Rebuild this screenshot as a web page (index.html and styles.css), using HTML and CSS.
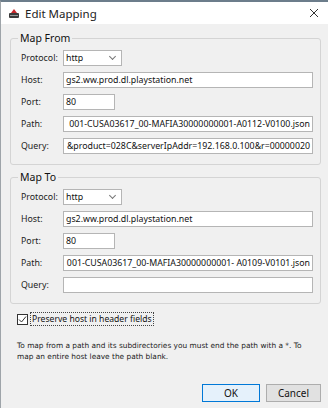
FILE: index.html
```html
<!DOCTYPE html>
<html lang="en">
<head>
    <meta charset="UTF-8">
    <title>Edit Mapping</title>
    <link rel="stylesheet" href="styles.css">
</head>
<body>
    <div class="window">
        <div class="titlebar">
            <svg class="app-icon" width="12" height="12" viewBox="0 0 12 12">
                <rect x="1" y="6" width="10" height="5" rx="1" fill="#3a3a3a"/>
                <path d="M3 6 L6 2 L9 6 Z" fill="#c8262a"/>
                <rect x="2" y="8" width="8" height="1" fill="#9a9a9a"/>
            </svg>
            <span class="title">Edit Mapping</span>
            <svg class="close" width="10" height="10" viewBox="0 0 10 10">
                <path d="M1 1 L9 9 M9 1 L1 9" stroke="#333" stroke-width="1"/>
            </svg>
        </div>

        <div class="content">
            <fieldset class="group">
                <legend>Map From</legend>
                <div class="row">
                    <label>Protocol:</label>
                    <div class="field select"><span>http</span><span class="chev"></span></div>
                </div>
                <div class="row">
                    <label>Host:</label>
                    <div class="field wide"><span>gs2.ww.prod.dl.playstation.net</span></div>
                </div>
                <div class="row">
                    <label>Port:</label>
                    <div class="field port"><span>80</span></div>
                </div>
                <div class="row">
                    <label>Path:</label>
                    <div class="field wide scrolled"><span>001-CUSA03617_00-MAFIA30000000001-A0112-V0100.json</span></div>
                </div>
                <div class="row">
                    <label>Query:</label>
                    <div class="field wide scrolled"><span>&amp;product=028C&amp;serverIpAddr=192.168.0.100&amp;r=00000020</span></div>
                </div>
            </fieldset>

            <fieldset class="group">
                <legend>Map To</legend>
                <div class="row">
                    <label>Protocol:</label>
                    <div class="field select"><span>http</span><span class="chev"></span></div>
                </div>
                <div class="row">
                    <label>Host:</label>
                    <div class="field wide"><span>gs2.ww.prod.dl.playstation.net</span></div>
                </div>
                <div class="row">
                    <label>Port:</label>
                    <div class="field port"><span>80</span></div>
                </div>
                <div class="row">
                    <label>Path:</label>
                    <div class="field wide scrolled"><span>001-CUSA03617_00-MAFIA30000000001- A0109-V0101.json</span></div>
                </div>
                <div class="row">
                    <label>Query:</label>
                    <div class="field wide"><span></span></div>
                </div>
            </fieldset>

            <div class="check-row">
                <span class="checkbox">
                    <svg width="9" height="9" viewBox="0 0 9 9">
                        <path d="M1 4.5 L3.5 7 L8 1.5" fill="none" stroke="#333" stroke-width="1"/>
                    </svg>
                </span>
                <span class="check-label">Preserve host in header fields</span>
            </div>

            <p class="help">To map from a path and its subdirectories you must end the path with a *. To map an entire host leave the path blank.</p>

            <div class="buttons">
                <button class="btn default">OK</button>
                <button class="btn">Cancel</button>
            </div>
        </div>
    </div>
</body>
</html>
```

FILE: styles.css
```css
body {
    margin: 0;
    padding: 0;
    font-family: "Noto Sans", "Open Sans", sans-serif;
    color: #111;
}

.window {
    width: 328px;
    height: 408px;
    box-sizing: border-box;
    border-top: 2px solid #6c7d8b;
    border-left: 1px solid #9ea4a9;
    background-color: #f0f0f0;
    display: flex;
    flex-direction: column;
    overflow: hidden;
}

.titlebar {
    height: 22px;
    background-color: #fff;
    display: flex;
    align-items: center;
    padding: 0 9px 0 7px;
}

.app-icon {
    margin-right: 5px;
}

.title {
    font-size: 11.5px;
    color: #222;
    flex: 1;
}

.content {
    flex: 1;
    padding: 7px 7px 0 9px;
    display: flex;
    flex-direction: column;
}

.group {
    margin: 0;
    min-width: 0;
    padding: 5px 7px 10px 10px;
    border: 1px solid #d4d4d4;
    border-radius: 3px;
    display: flex;
    flex-direction: column;
    gap: 6px;
}

.group + .group {
    margin-top: 5px;
}

legend {
    font-size: 10.5px;
    padding: 0 2px;
    margin-left: -3px;
    color: #111;
}

.row {
    display: flex;
    align-items: center;
    min-width: 0;
}

.row label {
    width: 42px;
    flex-shrink: 0;
    font-size: 8.8px;
    color: #222;
}

.field {
    height: 16px;
    box-sizing: border-box;
    background-color: #fff;
    border: 1px solid #b5b5b5;
    font-size: 8.8px;
    display: flex;
    align-items: center;
    padding: 0 2px;
    white-space: nowrap;
    overflow: hidden;
    color: #111;
}

.field span {
    flex-shrink: 0;
}

.wide {
    flex: 1 1 0;
    min-width: 0;
}

.port {
    width: 52px;
}

.select {
    width: 59px;
    justify-content: space-between;
    padding-right: 6px;
}

.chev {
    width: 4px;
    height: 4px;
    border-right: 1px solid #777;
    border-bottom: 1px solid #777;
    transform: rotate(45deg);
    margin-top: -3px;
}

.scrolled {
    justify-content: flex-end;
}

.check-row {
    display: flex;
    align-items: center;
    margin-top: 8px;
    padding-left: 7px;
}

.checkbox {
    width: 11px;
    height: 11px;
    box-sizing: border-box;
    border: 1px solid #333;
    background-color: #fff;
    display: flex;
    align-items: center;
    justify-content: center;
}

.check-label {
    margin-left: 2px;
    font-size: 8.6px;
    padding: 0 1px;
    border: 1px dotted #444;
    line-height: 12px;
}

.help {
    margin: 14px 0 0 7px;
    font-family: "DejaVu Sans", sans-serif;
    font-size: 7.4px;
    line-height: 11px;
    color: #222;
    width: 295px;
}

.buttons {
    margin-top: auto;
    margin-bottom: 6px;
    display: flex;
    justify-content: flex-end;
    gap: 6px;
}

.btn {
    height: 18px;
    padding: 0;
    font-family: "Noto Sans", sans-serif;
    font-size: 10px;
    color: #111;
    background-color: #e1e1e1;
    border: 1px solid #adadad;
    width: 55px;
}

.btn.default {
    width: 58px;
    background-color: #e5f1fb;
    border-color: #0078d7;
}
```
